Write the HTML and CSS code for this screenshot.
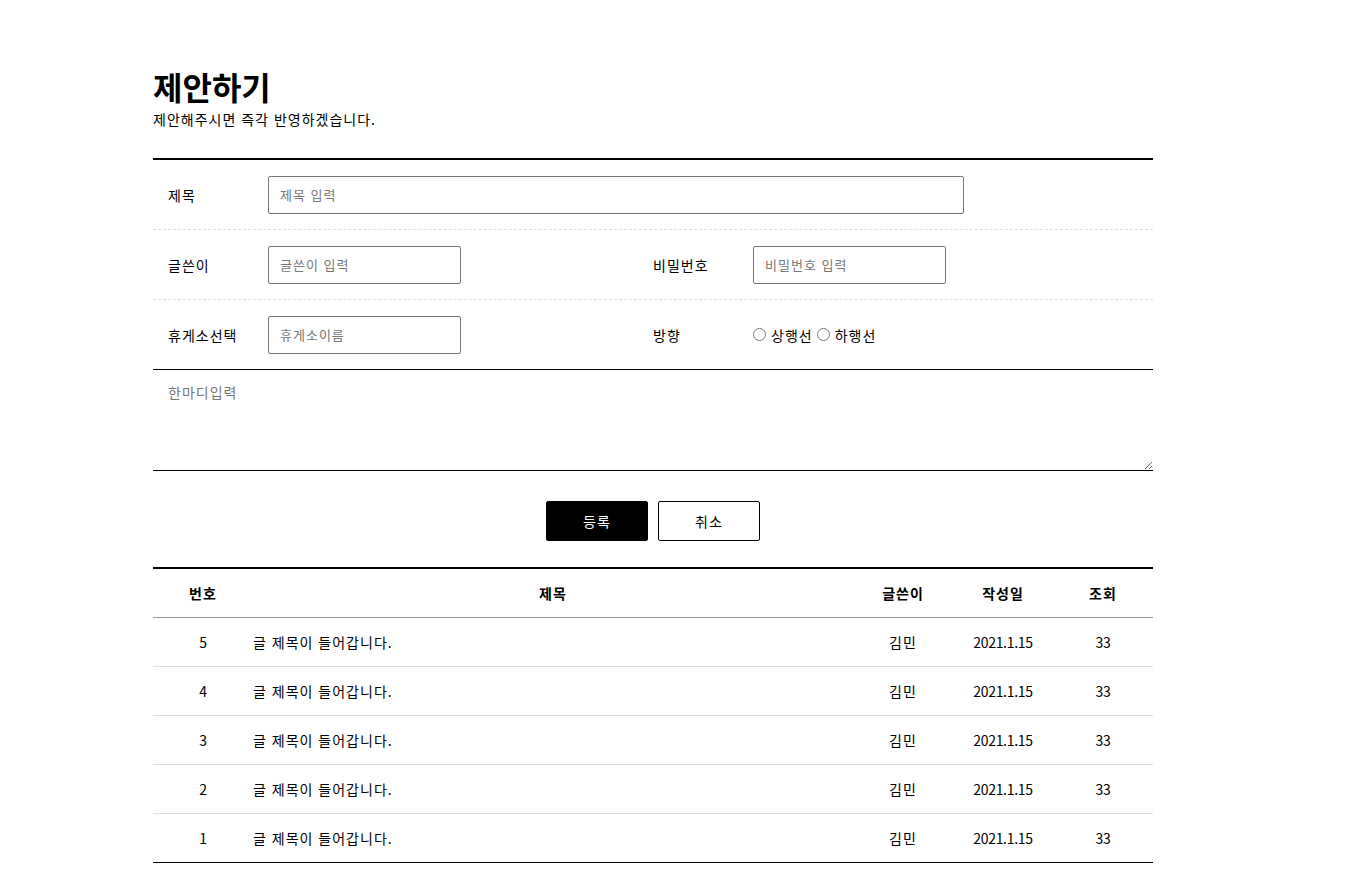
FILE: index.html
```html
<!DOCTYPE html>
<html lang="ko">
<head>
    <meta charset="UTF-8">
    <meta name="viewport" content="width=device-width, initial-scale=1.0">
    <title>제안하기</title>
    <link rel="stylesheet" href="styles.css">
</head>
<body>
    <main class="board-wrap">
        <div class="board-title">
            <h1>제안하기</h1>
            <p>제안해주시면 즉각 반영하겠습니다.</p>
        </div>

        <form class="write-form">
            <div class="form-row">
                <label class="form-label" for="title">제목</label>
                <input type="text" id="title" class="input-wide" placeholder="제목 입력">
            </div>
            <div class="form-row">
                <div class="form-group">
                    <label class="form-label" for="writer">글쓴이</label>
                    <input type="text" id="writer" placeholder="글쓴이 입력">
                </div>
                <div class="form-group">
                    <label class="form-label" for="pw">비밀번호</label>
                    <input type="password" id="pw" placeholder="비밀번호 입력">
                </div>
            </div>
            <div class="form-row last">
                <div class="form-group">
                    <label class="form-label" for="rest">휴게소선택</label>
                    <input type="text" id="rest" placeholder="휴게소이름">
                </div>
                <div class="form-group">
                    <span class="form-label">방향</span>
                    <div class="radio-box">
                        <label><input type="radio" name="dir"> 상행선</label>
                        <label><input type="radio" name="dir"> 하행선</label>
                    </div>
                </div>
            </div>
            <textarea class="comment" placeholder="한마디입력"></textarea>

            <div class="btn-area">
                <button type="submit" class="btn btn-dark">등록</button>
                <button type="button" class="btn btn-line">취소</button>
            </div>
        </form>

        <table class="board-list">
            <colgroup>
                <col style="width: 100px">
                <col style="width: 600px">
                <col style="width: 100px">
                <col style="width: 100px">
                <col style="width: 100px">
            </colgroup>
            <thead>
                <tr>
                    <th>번호</th>
                    <th>제목</th>
                    <th>글쓴이</th>
                    <th>작성일</th>
                    <th>조회</th>
                </tr>
            </thead>
            <tbody>
                <tr><td class="num">5</td><td class="subject">글 제목이 들어갑니다.</td><td>김민</td><td class="num">2021.1.15</td><td class="num">33</td></tr>
                <tr><td class="num">4</td><td class="subject">글 제목이 들어갑니다.</td><td>김민</td><td class="num">2021.1.15</td><td class="num">33</td></tr>
                <tr><td class="num">3</td><td class="subject">글 제목이 들어갑니다.</td><td>김민</td><td class="num">2021.1.15</td><td class="num">33</td></tr>
                <tr><td class="num">2</td><td class="subject">글 제목이 들어갑니다.</td><td>김민</td><td class="num">2021.1.15</td><td class="num">33</td></tr>
                <tr><td class="num">1</td><td class="subject">글 제목이 들어갑니다.</td><td>김민</td><td class="num">2021.1.15</td><td class="num">33</td></tr>
            </tbody>
        </table>
    </main>
</body>
</html>
```

FILE: styles.css
```css
* {
    margin: 0;
    padding: 0;
    box-sizing: border-box;
}

body {
    font-family: "Noto Sans CJK KR", "Noto Sans", sans-serif;
    font-size: 14px;
    letter-spacing: 1px;
    color: #000;
    background: #fff;
}

input, textarea, button {
    letter-spacing: inherit;
}

.board-wrap {
    width: 1000px;
    margin-left: 153px;
    padding-top: 66px;
}

.board-title h1 {
    font-size: 32px;
    line-height: 40px;
    font-weight: bold;
    letter-spacing: 0;
}

.board-title p {
    margin-top: 3px;
    font-size: 14px;
    line-height: 20px;
}

/* 글쓰기 폼 */
.write-form {
    margin-top: 29px;
    border-top: 2px solid #000;
}

.form-row {
    display: flex;
    align-items: center;
    height: 70px;
    padding-left: 15px;
    border-bottom: 1px dashed #ddd;
}

.form-row.last {
    border-bottom: 1px solid #000;
}

.form-group {
    display: flex;
    align-items: center;
    width: 485px;
}

.form-label {
    display: block;
    width: 100px;
    line-height: 20px;
}

.form-row input[type="text"],
.form-row input[type="password"] {
    width: 193px;
    height: 38px;
    padding: 0 11px;
    border: 1px solid #767676;
    border-radius: 2px;
    font-family: inherit;
    font-size: 13px;
    outline: none;
}

.form-row .input-wide {
    width: 696px !important;
}

::placeholder {
    color: #777;
}

.radio-box {
    display: flex;
    align-items: center;
    gap: 4px;
    line-height: 20px;
}

.radio-box label {
    display: flex;
    align-items: center;
}

.radio-box input {
    width: 13px;
    height: 13px;
    margin: 0 5px 0 0;
}

.comment {
    display: block;
    width: 100%;
    height: 101px;
    padding: 12px 15px;
    border: none;
    border-bottom: 1px solid #000;
    font-family: inherit;
    font-size: 14px;
    line-height: 20px;
    resize: vertical;
    outline: none;
}

.btn-area {
    display: flex;
    justify-content: center;
    gap: 10px;
    margin-top: 30px;
}

.btn {
    width: 102px;
    height: 40px;
    border: 1px solid #000;
    border-radius: 2px;
    font-family: inherit;
    font-size: 14px;
    cursor: pointer;
}

.btn-dark {
    background: #000;
    color: #fff;
}

.btn-line {
    background: #fff;
    color: #000;
}

/* 목록 */
.board-list {
    width: 100%;
    margin-top: 26px;
    border-collapse: collapse;
    table-layout: fixed;
    border-top: 2px solid #000;
    border-bottom: 1px solid #000;
}

.board-list th {
    height: 49px;
    font-weight: bold;
    text-align: center;
    border-bottom: 1px solid #999;
}

.board-list td {
    height: 49px;
    text-align: center;
    border-bottom: 1px solid #ddd;
}

.board-list tr:last-child td {
    border-bottom: none;
}

.board-list td.num {
    letter-spacing: -0.3px;
}

.board-list td.subject {
    text-align: left;
}
```
